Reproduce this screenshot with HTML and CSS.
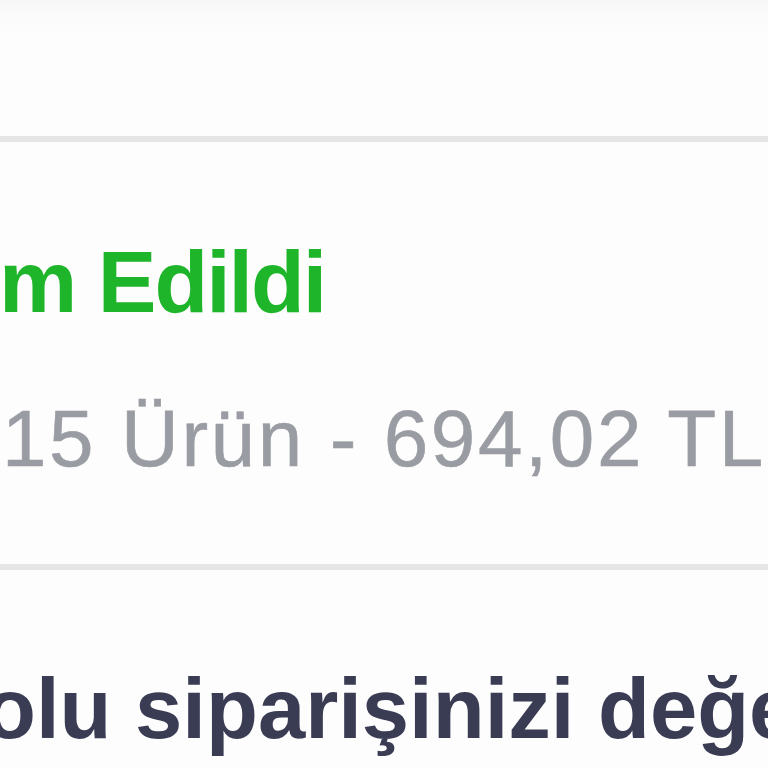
FILE: index.html
```html
<!DOCTYPE html>
<html lang="tr">
<head>
<meta charset="UTF-8">
<meta name="viewport" content="width=device-width, initial-scale=1.0">
<title>Siparişlerim</title>
<link rel="stylesheet" href="styles.css">
</head>
<body>

<div class="page">
    <div class="top-bar"></div>

    <div class="order-card">
        <div class="order-status">Teslim Edildi</div>
        <div class="order-summary">15 Ürün - 694,02 TL</div>
    </div>

    <div class="review">
        <h2 class="review-title">olu siparişinizi değerlendirin</h2>
    </div>
</div>

</body>
</html>
```

FILE: styles.css
```css
body {
    font-family: "Liberation Sans", Arial, sans-serif;
    margin: 0;
    padding: 0;
    background-color: #fdfdfd;
}

.page {
    width: 768px;
    height: 768px;
    overflow: hidden;
}

.top-bar {
    height: 136px;
    background: linear-gradient(#f6f6f6 0px, #fafafa 10px, #fdfdfd 32px, #fdfdfd 100%);
    border-bottom: 6px solid #e5e5e5;
}

.order-card {
    padding: 96px 0 85px 0;
    border-bottom: 6px solid #e6e6e6;
    white-space: nowrap;
}

.order-status {
    font-size: 88px;
    line-height: 1;
    font-weight: bold;
    color: #1fb52a;
    letter-spacing: -2px;
    margin-left: -185px;
}

.order-summary {
    font-size: 80px;
    line-height: 1;
    color: #9a9ca3;
    margin-top: 73px;
    margin-left: 2px;
    letter-spacing: 2.6px;
    -webkit-text-stroke: 0.6px #9a9ca3;
}

.review {
    padding-top: 96px;
    white-space: nowrap;
}

.review-title {
    margin: 0;
    font-size: 85px;
    line-height: 1;
    font-weight: bold;
    color: #3a3c54;
    margin-left: -16px;
}
```
